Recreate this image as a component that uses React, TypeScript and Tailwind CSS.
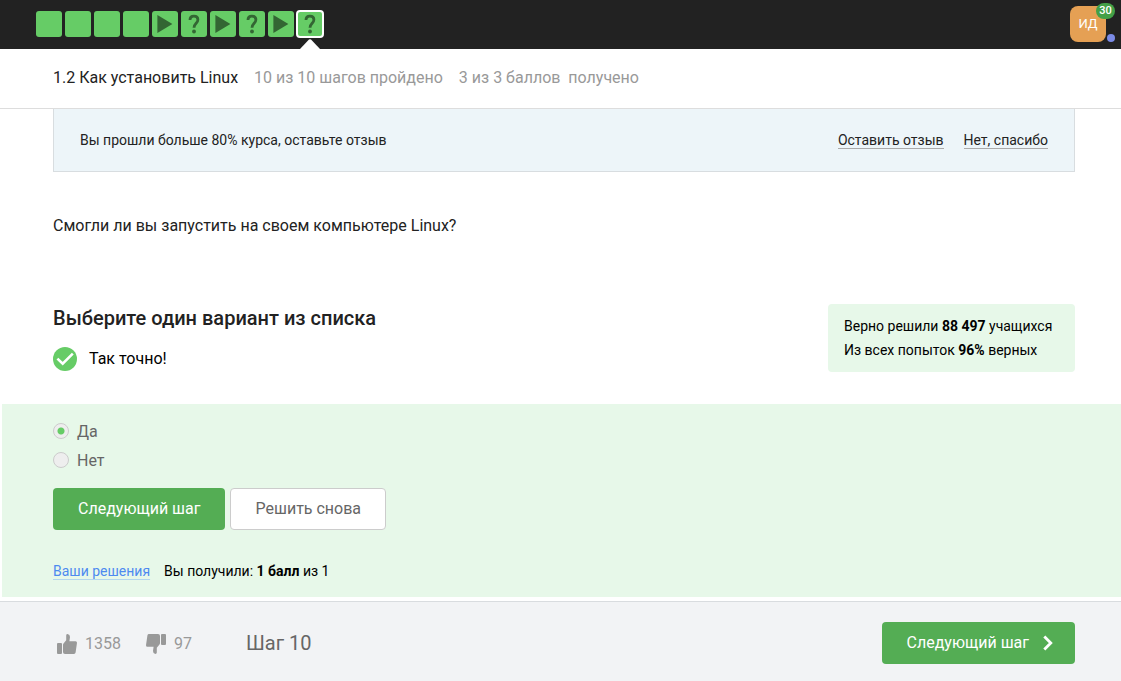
import { useState } from "react";

type StepKind = "text" | "video" | "quiz";

const steps: StepKind[] = ["text", "text", "text", "text", "video", "quiz", "video", "quiz", "video", "quiz"];

const labels: Record<StepKind, string> = { text: "Текст", video: "Видео", quiz: "Задача" };

const thumb =
  "M6 11 Q6 9.9 6.7 9.2 L9.2 6.2 V1.4 Q9.2 0 10.6 0 Q13 .3 13 3 L12.4 7.2 H18.6 Q20 7.2 20 8.8 L18.6 18.6 Q18.3 20 17 20 H8 Q6 20 6 18 Z M1 9 H4 Q5 9 5 10 V19 Q5 20 4 20 H1 Q0 20 0 19 V10 Q0 9 1 9 Z";

function StepIcon({ kind }: { kind: StepKind }) {
  if (kind === "video") {
    return (
      <svg viewBox="0 0 26 26" className="size-[26px] fill-[#336633]" aria-hidden="true">
        <path d="M5.4 4 L20.4 13 L5.4 22 Z" />
      </svg>
    );
  }
  if (kind === "quiz") {
    return (
      <svg viewBox="0 0 26 26" className="size-[26px]" fill="none" aria-hidden="true">
        <path d="M9 9 C9 6.4 10.6 5.1 12.9 5.1 C15.5 5.1 16.9 6.5 16.9 8.8 C16.9 12.2 13 12.4 13 16.8" stroke="#336633" strokeWidth="2.8" />
        <circle cx="13" cy="20.5" r="1.9" fill="#336633" />
      </svg>
    );
  }
  return null;
}

function Header() {
  const current = steps.length - 1;
  return (
    <header className="flex h-[49px] items-center justify-between bg-[#222222] pr-[15px] pb-px pl-9">
      <nav className="flex gap-[3px]" aria-label="Шаги урока">
        {steps.map((kind, i) => (
          <a
            key={i}
            href={`#step-${i + 1}`}
            aria-label={`${labels[kind]}, шаг ${i + 1}`}
            className={
              i === current
                ? "relative size-[26px] rounded-[3px] bg-[#66cc66] outline-2 -outline-offset-1 outline-white"
                : "relative size-[26px] rounded-[3px] bg-[#66cc66]"
            }
          >
            <StepIcon kind={kind} />
            {i === current && (
              <svg viewBox="0 0 20 10" className="absolute top-7 left-[3px] h-2.5 w-5 fill-white" aria-hidden="true">
                <path d="M0 10 L9 .6 Q10 -.2 11 .6 L20 10 Z" />
              </svg>
            )}
          </a>
        ))}
      </nav>
      <button type="button" className="relative size-9 rounded-lg bg-[#e5a054] text-[13px] text-white">
        ИД
        <span className="absolute -top-[3px] -right-[9px] flex h-4 w-[19px] items-center justify-center rounded-full bg-[#43a047] text-[11px] font-medium">
          30
        </span>
        <span className="absolute -right-[9px] bottom-0 size-2 rounded-full bg-[#7b8be6]" />
      </button>
    </header>
  );
}

function Choice({ text, checked, onSelect }: { text: string; checked: boolean; onSelect: () => void }) {
  return (
    <label className="flex h-[29px] items-center gap-2 text-[#666666]">
      <input
        type="radio"
        name="answer"
        checked={checked}
        onChange={onSelect}
        className="mt-1.5 size-4 appearance-none self-start rounded-full border border-[#cccccc] bg-[#eeeeee] checked:bg-[radial-gradient(circle,#66cc66_3px,#eeeeee_4px)]"
      />
      {text}
    </label>
  );
}

export default function App() {
  const [answer, setAnswer] = useState("Да");
  return (
    <div className="flex min-h-screen flex-col bg-white font-[Roboto,sans-serif] text-base text-[#222222]">
      <Header />
      <div className="flex h-[60px] items-center gap-4 border-b border-[#dddddd] pb-0.5 pl-[53px] text-[#999999]">
        <h1 className="text-[#222222]">1.2 Как установить Linux</h1>
        <span>10 из 10 шагов пройдено</span>
        <span className="whitespace-pre">3 из 3 баллов  получено</span>
      </div>

      <main>
        <div className="pr-[46px] pl-[53px]">
          <div className="flex h-[63px] items-center justify-between border-x border-b border-[#d8dde0] bg-[#edf5f9] px-[26px] text-sm">
            <p>Вы прошли больше 80% курса, оставьте отзыв</p>
            <div className="flex gap-5 leading-4">
              <a href="#review" className="border-b border-[#aaaaaa]">Оставить отзыв</a>
              <a href="#dismiss" className="border-b border-[#aaaaaa]">Нет, спасибо</a>
            </div>
          </div>

          <p className="mt-[42px]">Смогли ли вы запустить на своем компьютере Linux?</p>

          <div className="mt-[66px] flex items-start justify-between">
            <div>
              <h2 id="question" className="text-xl leading-7 font-medium">Выберите один вариант из списка</h2>
              <p className="mt-[15px] flex items-center gap-3 text-black">
                <svg viewBox="0 0 24 24" className="size-6" fill="none" aria-hidden="true">
                  <circle cx="12" cy="12" r="12" fill="#66cc66" />
                  <path d="M4.4 11.6 L9.7 16.7 L19.8 6.6" stroke="white" strokeWidth="2.6" />
                </svg>
                Так точно!
              </p>
            </div>
            <p className="min-w-[247px] rounded bg-[#e7f8e9] px-4 py-2.5 text-sm leading-6 text-black">
              Верно решили <b>88 497</b> учащихся
              <br />
              Из всех попыток <b>96%</b> верных
            </p>
          </div>
        </div>

        <section className="mt-8 mb-1 ml-0.5 bg-[#e7f8e9] pt-[13px] pb-4 pl-[51px]">
          <div role="radiogroup" aria-labelledby="question" className="flex flex-col items-start">
            <Choice text="Да" checked={answer === "Да"} onSelect={() => setAnswer("Да")} />
            <Choice text="Нет" checked={answer === "Нет"} onSelect={() => setAnswer("Нет")} />
          </div>
          <div className="mt-[13px] flex gap-[5px]">
            <button type="button" className="h-[42px] rounded bg-[#54ad54] px-[25px] text-white">
              Следующий шаг
            </button>
            <button type="button" className="h-[42px] rounded border border-[#cccccc] bg-white px-6 text-[#666666]">
              Решить снова
            </button>
          </div>
          <p className="mt-[31px] flex gap-3.5 text-sm text-black">
            <a href="#solutions" className="text-[#4d8af0] underline decoration-[#b3d7ee] decoration-1 underline-offset-3">
              Ваши решения
            </a>
            <span>
              Вы получили: <b>1 балл</b> из 1
            </span>
          </p>
        </section>
      </main>

      <footer className="mt-auto flex h-20 items-center border-t border-[#d9dcdf] bg-[#f2f3f5] pt-[3px] pr-[46px] pl-[57px] text-[#999999]">
        <button type="button" aria-label="Нравится: 1358" className="flex items-center gap-2 pt-0.5">
          <svg viewBox="0 0 20 20" className="size-5 fill-[#999999]" aria-hidden="true">
            <path d={thumb} />
          </svg>
          1358
        </button>
        <button type="button" aria-label="Не нравится: 97" className="ml-[25px] flex items-center gap-2 pt-0.5">
          <svg viewBox="0 0 20 20" className="size-5 fill-[#999999]" aria-hidden="true">
            <path d={thumb} transform="rotate(180 10 10)" />
          </svg>
          97
        </button>
        <span className="ml-[54px] text-xl text-[#666666]">Шаг 10</span>
        <button type="button" className="ml-auto flex h-[42px] items-center gap-3.5 rounded bg-[#54ad54] pr-[22px] pl-[25px] text-white">
          Следующий шаг
          <svg viewBox="0 0 10 16" className="h-4 w-2.5" fill="none" aria-hidden="true">
            <path d="M1.3 1.4 L7.8 8 L1.3 14.6" stroke="white" strokeWidth="2.8" />
          </svg>
        </button>
      </footer>
    </div>
  );
}
